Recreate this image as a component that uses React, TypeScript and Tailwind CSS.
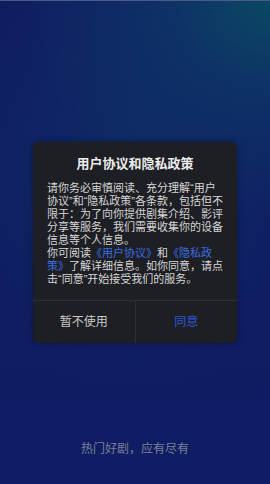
import React from 'react';

const font = { fontFamily: '"Liberation Sans", "Noto Sans CJK SC", sans-serif' };

export default function App() {
  return (
    <div
      className="relative flex h-[484px] w-full flex-col overflow-hidden bg-[radial-gradient(ellipse_90%_45%_at_100%_0%,#0b4862_0%,#0e3067_45%,transparent_100%),radial-gradient(ellipse_80%_50%_at_50%_30%,#0e2a66_0%,transparent_100%),linear-gradient(#111a60,#0f1d64)]"
      style={font}
    >
      <div className="h-px w-full bg-[#4b5a88]" />
      <div className="mx-[33px] mt-[141px] rounded-[6px] bg-[#1e1f24] shadow-[0_0_6px_rgba(0,0,0,0.35)]">
        <h1 className="pt-[13px] text-center text-[13px] font-bold leading-[18px] text-[#ececec]">
          用户协议和隐私政策
        </h1>
        <div className="px-[14px] pb-[14px] pt-[9px] text-[11px] leading-[13px] text-[#d6d6d6]">
          <p className="whitespace-nowrap">请你务必审慎阅读、充分理解“用户</p>
          <p className="whitespace-nowrap">协议”和“隐私政策”各条款，包括但不</p>
          <p className="whitespace-nowrap">限于：为了向你提供剧集介绍、影评</p>
          <p className="whitespace-nowrap">分享等服务，我们需要收集你的设备</p>
          <p className="whitespace-nowrap">信息等个人信息。</p>
          <p className="whitespace-nowrap">
            你可阅读<span className="text-[#3a6ce0]">《用户协议》</span>和
            <span className="text-[#3a6ce0]">《隐私政</span>
          </p>
          <p className="whitespace-nowrap">
            <span className="text-[#3a6ce0]">策》</span>了解详细信息。如你同意，请点
          </p>
          <p className="whitespace-nowrap">击“同意”开始接受我们的服务。</p>
        </div>
        <div className="flex h-[43px] border-t border-[#2f3036]">
          <button className="flex-1 text-[12px] text-[#c9c9c9]">暂不使用</button>
          <div className="w-px bg-[#2f3036]" />
          <button className="flex-1 text-[12px] text-[#2f56d6]">同意</button>
        </div>
      </div>
      <div className="flex-1" />
      <p className="pb-[27px] text-center text-[12px] leading-[16px] text-[#7a8096]">
        热门好剧，应有尽有
      </p>
    </div>
  );
}
